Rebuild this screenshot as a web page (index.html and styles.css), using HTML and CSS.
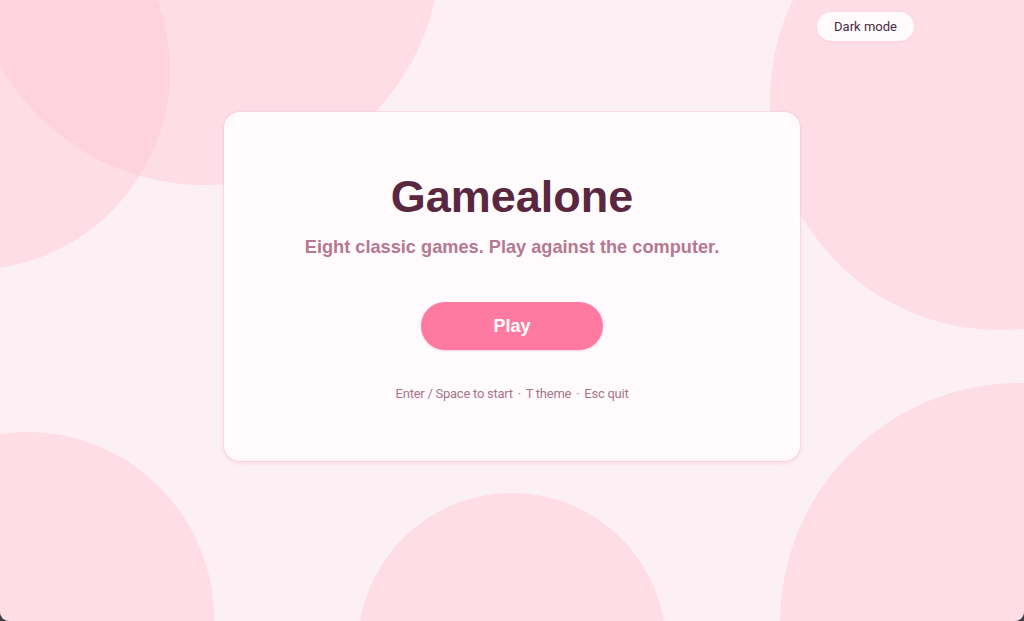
FILE: index.html
```html
<!DOCTYPE html>
<html lang="en">
<head>
<meta charset="utf-8">
<title>Gamealone</title>
<link rel="stylesheet" href="styles.css">
</head>
<body>
<div class="page">
  <div class="bubbles" aria-hidden="true">
    <span class="bubble b1"></span>
    <span class="bubble b2"></span>
    <span class="bubble b3"></span>
    <span class="bubble b4"></span>
    <span class="bubble b5"></span>
    <span class="bubble b6"></span>
  </div>
  <header class="topbar">
    <button class="theme-toggle">Dark mode</button>
  </header>
  <main class="stage">
    <section class="card">
      <h1 class="title">Gamealone</h1>
      <p class="subtitle">Eight classic games. Play against the computer.</p>
      <button class="play">Play</button>
      <p class="hints">Enter / Space to start <span class="dot">·</span> T theme <span class="dot">·</span> Esc quit</p>
    </section>
  </main>
</div>
</body>
</html>
```

FILE: styles.css
```css
html {
  margin: 0;
  background: #3b4046;
}
body {
  margin: 0;
  width: 1024px;
  height: 621px;
  overflow: hidden;
  border-radius: 0 0 9px 9px;
  background: #fdf0f4;
  font-family: "Liberation Sans", Arial, sans-serif;
}
.page {
  position: relative;
  width: 100%;
  height: 100%;
  display: flex;
  flex-direction: column;
}
.bubbles {
  position: absolute;
  inset: 0;
  overflow: hidden;
  z-index: 0;
}
.bubble {
  position: absolute;
  border-radius: 50%;
  background: rgba(255, 196, 213, 0.44);
}
.b1 { left: -30px; top: -285px; width: 470px; height: 470px; }
.b2 { left: -230px; top: -130px; width: 400px; height: 400px; }
.b3 { left: 770px; top: -130px; width: 460px; height: 460px; }
.b4 { left: -160px; top: 432px; width: 374px; height: 374px; }
.b5 { left: 358px; top: 493px; width: 308px; height: 308px; }
.b6 { left: 780px; top: 383px; width: 480px; height: 480px; }

.topbar {
  position: relative;
  z-index: 1;
  display: flex;
  justify-content: flex-end;
  padding: 12px 110px 0 0;
}
.theme-toggle {
  width: 97px;
  height: 29px;
  border: none;
  border-radius: 15px;
  background: rgba(255, 255, 255, 0.85);
  color: #4a2a3a;
  font-family: Roboto, "Noto Sans", sans-serif;
  font-size: 13px;
  padding: 0;
  box-shadow: 0 1px 3px rgba(230, 150, 175, 0.15);
}
.stage {
  position: relative;
  z-index: 1;
  display: flex;
  justify-content: center;
  padding-top: 71px;
}
.card {
  box-sizing: border-box;
  width: 576px;
  height: 349px;
  background: #fffbfc;
  border-radius: 16px;
  box-shadow: 0 2px 4px rgba(240, 170, 195, 0.35), 0 0 0 1px rgba(250, 205, 220, 0.5);
  display: flex;
  flex-direction: column;
  align-items: center;
  padding-top: 58px;
}
.title {
  margin: 0;
  font-size: 45px;
  line-height: 54px;
  font-weight: 700;
  color: #5a2740;
}
.subtitle {
  margin: 11px 0 0;
  font-size: 18.2px;
  line-height: 25px;
  font-weight: 700;
  color: #b57891;
}
.play {
  margin-top: 42px;
  width: 182px;
  height: 48px;
  border: none;
  border-radius: 24px;
  background: #ff7aa1;
  color: #ffffff;
  font-family: "Liberation Sans", Arial, sans-serif;
  font-weight: 700;
  font-size: 18px;
  box-shadow: 0 1px 2px rgba(230, 100, 140, 0.25);
}
.hints {
  margin: 35px 0 0;
  font-family: Roboto, "Noto Sans", sans-serif;
  font-size: 13px;
  line-height: 18px;
  color: #a87489;
  letter-spacing: -0.25px;
}
.dot {
  margin: 0 2px;
}
```
